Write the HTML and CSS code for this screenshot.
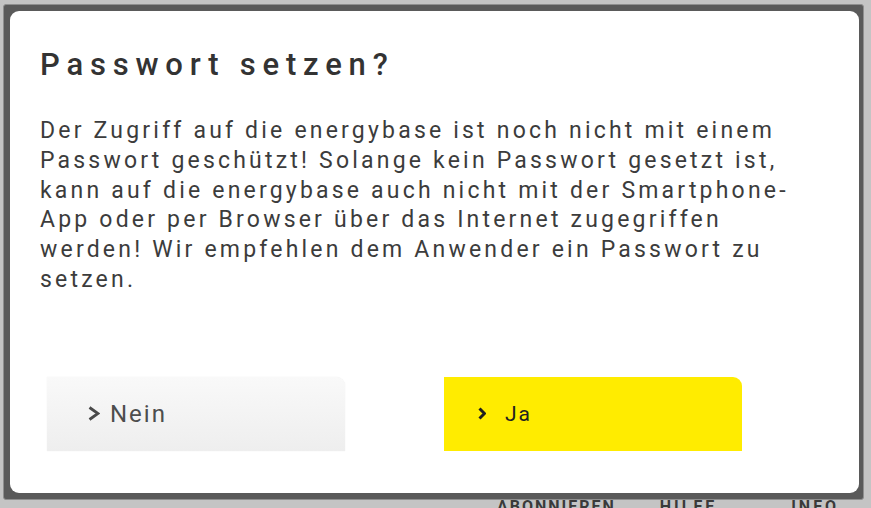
FILE: index.html
```html
<!DOCTYPE html>
<html lang="de">
<head>
<meta charset="utf-8">
    <title>Passwort setzen?</title>
    <link rel="stylesheet" href="styles.css">
</head>
<body>
    <div class="frame">
        <div class="dialog">
            <h2 class="title">Passwort setzen?</h2>
            <p class="message">Der Zugriff auf die energybase ist noch nicht mit einem<br>Passwort geschützt! Solange kein Passwort gesetzt ist,<br>kann auf die energybase auch nicht mit der Smartphone-<br>App oder per Browser über das Internet zugegriffen<br>werden! Wir empfehlen dem Anwender ein Passwort zu<br>setzen.</p>

            <div class="actions">
                <button type="button" class="btn btn-no">
                    <svg class="chev" width="12" height="15" viewBox="0 0 12 15"><polyline points="1.5,1.5 10,7.5 1.5,13.5" fill="none" stroke="#4a4a4a" stroke-width="2.8"/></svg>
                    Nein
                </button>
                <button type="button" class="btn btn-yes">
                    <svg class="chev" width="8" height="15" viewBox="0 0 8 15"><polyline points="1.5,2.5 6.5,7.5 1.5,12.5" fill="none" stroke="#1e1e1e" stroke-width="3"/></svg>
                    Ja
                </button>
            </div>
        </div>
    </div>
    <div class="behind">
        <span class="w1">ABONNIEREN</span>
        <span class="w2">HILFE</span>
        <span class="w3">INFO</span>
    </div>
</body>
</html>
```

FILE: styles.css
```css
html, body {
    height: 100%;
}
body {
    margin: 0;
    padding: 4px 0 0 3px;
    box-sizing: border-box;
    background-color: #c4c4c4;
    font-family: Roboto, "DejaVu Sans", sans-serif;
    overflow: hidden;
}
.frame {
    width: 861px;
    height: 496px;
    box-sizing: border-box;
    padding: 6px 4px 6px 6px;
    background-color: #5a5a5a;
    border: 1px solid #8f8f8f;
    border-radius: 3px;
}
.dialog {
    height: 100%;
    background-color: #fff;
    border-radius: 9px;
    padding: 0 30px;
    box-sizing: border-box;
    overflow: hidden;
}
.title {
    margin: 0;
    padding-top: 36px;
    font-size: 31px;
    line-height: 36px;
    font-weight: 500;
    letter-spacing: 6.8px;
    color: #333;
}
.message {
    margin: 33px 0 0;
    font-size: 23px;
    line-height: 29.8px;
    letter-spacing: 3.2px;
    color: #3c3c3c;
    white-space: nowrap;
}
.actions {
    display: flex;
    gap: 99px;
    margin-top: 82px;
    padding-left: 7px;
}
.btn {
    display: flex;
    align-items: center;
    width: 298px;
    height: 74px;
    border: none;
    border-radius: 0 9px 0 0;
    font-family: inherit;
    cursor: pointer;
}
.btn-no {
    padding-left: 41px;
    background: linear-gradient(#f9f9f9, #eeeeee);
    box-shadow: 0 0 1px rgba(0, 0, 0, 0.15);
    color: #4d4d4d;
    font-size: 24px;
    letter-spacing: 2px;
    gap: 10px;
}
.btn-yes {
    padding-left: 34px;
    background-color: #ffec00;
    color: #222;
    font-size: 21px;
    letter-spacing: 2px;
    gap: 19px;
}
.behind {
    height: 8px;
    overflow: hidden;
    font-size: 16px;
    line-height: 14px;
    font-weight: bold;
    color: #3a3a3a;
    white-space: nowrap;
}
.behind span {
    display: inline-block;
}
.w1 { margin-left: 494px; letter-spacing: 2px; }
.w2 { margin-left: 40px; letter-spacing: 3px; }
.w3 { margin-left: 70px; letter-spacing: 3px; }
```
